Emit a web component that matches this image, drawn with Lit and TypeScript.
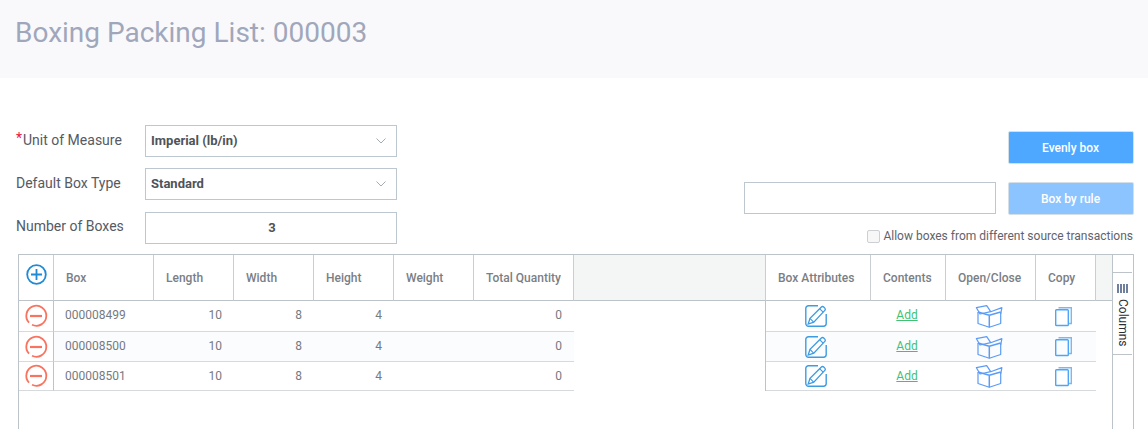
import { LitElement, html, css, svg } from "lit";
import { customElement } from "lit/decorators.js";

const rows = ["000008499", "000008500", "000008501"];

const plusIcon = svg`<circle cx="10.5" cy="10.5" r="9.3" fill="none" stroke="#1f8ad6" stroke-width="1.8"/><path d="M5 10.5h11M10.5 5v11" fill="none" stroke="#1f8ad6" stroke-width="1.8"/>`;
const minusIcon = svg`<path d="M7 19.8A10 10 0 1 0 4 17.6" fill="none" stroke="#f9735f" stroke-width="1.8"/><path d="M5 11h12" stroke="#f9735f" stroke-width="2.2"/>`;
const editIcon = svg`<path d="M13 .8H3.5A2.7 2.7 0 0 0 .8 3.5v15a2.7 2.7 0 0 0 2.7 2.7h15a2.7 2.7 0 0 0 2.7-2.7V9" fill="none" stroke="#3d9be0" stroke-width="1.4"/><path d="M3.2 19l1.8-5.6L16.4 2a1.6 1.6 0 0 1 2.3 0l1.1 1.1a1.6 1.6 0 0 1 0 2.3L8.8 17.1z" fill="none" stroke="#3d9be0" stroke-width="1.3"/><path d="M14.8 3.8l3.4 3.4M5 13.4l3.6 3.7" stroke="#3d9be0" stroke-width="1.1"/>`;
const boxIcon = svg`<g fill="none" stroke="#5c9cf5" stroke-linejoin="round" stroke-width="1.2"><path d="M2 7v11.5l11.3 3.8 11.4-3.8V7"/><path d="M2 7l11.3 3.3L24.7 7M13.3 10.3v12" stroke-width="1.5"/><path d="M4 9L.4 2.6 10.7.6l4 6.1zM14.7 6.7l11.2-4.1-1.2 6.4"/></g>`;
const copyIcon = svg`<g fill="none" stroke-width="1.4"><path d="M3.5 .7H16.3V16.5H13.5" stroke="#7cb8f2"/><rect x=".7" y="2.7" width="12.6" height="15.8" rx=".8" stroke="#4da6f5"/></g>`;

@customElement("app-root")
export class AppRoot extends LitElement {
  static styles = css`
    :host {
      display: block;
      height: 429px;
      overflow: hidden;
      background: #fff;
      font-family: Roboto, "Liberation Sans", sans-serif;
      font-size: 12px;
      color: #6d7178;
    }
    .page-head {
      height: 78px;
      background: #f9f9fc;
      padding: 16px 15px 0;
      box-sizing: border-box;
    }
    .page-head h1 {
      margin: 0;
      font-size: 28px;
      line-height: 34px;
      font-weight: 400;
      color: #a1a7ba;
    }
    .form {
      display: flex;
      justify-content: space-between;
      padding: 47px 14px 0 16px;
      height: 176px;
      box-sizing: border-box;
    }
    .fields {
      display: grid;
      grid-template-columns: 129px 252px;
      row-gap: 11px;
      align-items: center;
      align-content: start;
    }
    label {
      font-size: 14px;
      color: #555a63;
      line-height: 32px;
      margin-top: -2px;
    }
    label.last {
      margin-top: -3px;
    }
    .req {
      color: #ee1148;
      position: relative;
      top: -2px;
      margin-right: 1px;
    }
    .control {
      height: 32px;
      border: 1px solid #bcc7cf;
      background: #fff;
      display: flex;
      align-items: center;
      justify-content: space-between;
      padding: 0 10px 1px 5px;
      box-sizing: border-box;
      font-size: 13px;
      font-weight: 700;
      color: #4f5359;
    }
    .control.num {
      justify-content: center;
      padding: 0 0 1px 2px;
      margin-top: 1px;
    }
    .chev {
      width: 10px;
      height: 6px;
    }
    .actions {
      display: grid;
      grid-template-columns: 252px 126px;
      column-gap: 12px;
      align-content: start;
      margin-top: 6px;
    }
    .btn {
      grid-column: 2;
      height: 33px;
      border: 1px solid #d4dfe8;
      border-radius: 2px;
      box-sizing: border-box;
      background: #4fa8ff;
      color: #fff;
      display: flex;
      align-items: center;
      justify-content: center;
      padding-right: 1px;
      font-size: 12px;
      font-weight: 500;
    }
    .btn.off {
      background: #8cc4ff;
    }
    .rule-row {
      display: contents;
    }
    .rule-input {
      height: 32px;
      border: 1px solid #bcc7cf;
      box-sizing: border-box;
      margin-top: 18px;
    }
    .rule-row .btn {
      margin-top: 18px;
    }
    .allow {
      grid-column: 1 / 3;
      display: flex;
      justify-content: flex-end;
      align-items: center;
      gap: 3px;
      margin: 14px 1px 0 0;
      font-size: 12px;
      color: #5f636b;
      line-height: 14px;
    }
    .box {
      width: 13px;
      height: 13px;
      border: 1px solid #ccd0d4;
      border-radius: 2px;
      background: #f7f7f7;
      box-sizing: border-box;
    }
    .table-wrap {
      display: flex;
      margin: 0 14px 0 18px;
      height: 175px;
      border: 1px solid #bcc3c9;
      border-bottom: 0;
      box-sizing: border-box;
    }
    .grid {
      width: 1093px;
      flex: none;
      display: grid;
      grid-template-columns: 35px 100px 80px 80px 80px 80px 100px 192px 105px 75px 90px 60px 16px;
      grid-template-rows: 46px 31px 30px 29px;
      align-content: start;
    }
    .grid > div {
      box-sizing: border-box;
      display: flex;
      align-items: center;
    }
    .th {
      background: #fff;
      border-right: 1px solid #c9ced2;
      border-bottom: 1px solid #bcc3c9;
      font-weight: 500;
      color: #7a7e85;
      padding-left: 12px;
    }
    .th.first {
      justify-content: center;
      padding: 0 0 7px 1px;
    }
    .fill {
      background: #f4f6f6;
      border-bottom: 1px solid #bcc3c9;
    }
    .fill.bordered {
      border-right: 1px solid #c9ced2;
    }
    .grid > .td {
      align-items: flex-start;
      border-bottom: 1px solid #d6dadd;
      color: #767a81;
      padding: 7px 0 0 11px;
      line-height: 14px;
    }
    .grid > .td.alt {
      background: #fbfcfe;
    }
    .grid > .td.num {
      justify-content: flex-end;
      padding-left: 0;
      padding-right: 12px;
    }
    .grid > .td.link {
      justify-content: center;
      padding: 7px 3px 0 0;
    }
    .grid > .td.icon {
      align-items: center;
      justify-content: center;
      padding: 0 5px 0 0;
    }
    .grid > .td.sel {
      align-items: center;
      border-right: 1px solid #bcc3c9;
      padding: 0 0 0 6px;
    }
    .td a {
      color: #3fc176;
      text-decoration: underline;
    }
    .gap {
      background: #fff;
    }
    .gap.edge {
      border-right: 1px solid #bcc3c9;
    }
    svg {
      display: block;
      overflow: visible;
    }
    .side {
      width: 20px;
      flex: none;
      border-left: 1px solid #bcc3c9;
      box-sizing: border-box;
      background: #fff;
    }
    .tab {
      margin-top: 17px;
      height: 83px;
      border-top: 1px solid #bcc3c9;
      border-bottom: 1px solid #bcc3c9;
      box-sizing: border-box;
      display: flex;
      flex-direction: column;
      align-items: center;
      padding-top: 11px;
      gap: 6px;
      color: #2a2d33;
    }
    .bars {
      width: 11px;
      height: 9px;
      background: repeating-linear-gradient(to right, #6f7f9c 0 2px, transparent 2px 3px);
    }
    .tab span {
      writing-mode: vertical-rl;
      font-size: 12px;
      line-height: 14px;
    }
  `;

  private chevron() {
    return html`<svg class="chev" viewBox="0 0 10 6">
      <path d="M.5.5 5 5 9.5.5" fill="none" stroke="#a3abb3" stroke-width="1" />
    </svg>`;
  }

  private icon(w: number, h: number, body: unknown) {
    return html`<svg width=${w} height=${h} viewBox="0 0 ${w} ${h}">${body}</svg>`;
  }

  private renderRow(id: string, i: number) {
    const alt = i === 1 ? "alt" : "";
    return html`
      <div class="td sel">${this.icon(22, 22, minusIcon)}</div>
      <div class="td ${alt}">${id}</div>
      <div class="td num ${alt}">10</div>
      <div class="td num ${alt}">8</div>
      <div class="td num ${alt}">4</div>
      <div class="td ${alt}"></div>
      <div class="td num ${alt}">0</div>
      <div class="gap edge"></div>
      <div class="td icon ${alt}">${this.icon(22, 22, editIcon)}</div>
      <div class="td link ${alt}"><a>Add</a></div>
      <div class="td icon ${alt}">${this.icon(26, 22, boxIcon)}</div>
      <div class="td icon ${alt}">${this.icon(17, 19, copyIcon)}</div>
      <div class="gap"></div>
    `;
  }

  render() {
    return html`
      <div class="page-head"><h1>Boxing Packing List: 000003</h1></div>
      <div class="form">
        <div class="fields">
          <label><span class="req">*</span>Unit of Measure</label>
          <div class="control">Imperial (lb/in) ${this.chevron()}</div>
          <label>Default Box Type</label>
          <div class="control">Standard ${this.chevron()}</div>
          <label class="last">Number of Boxes</label>
          <div class="control num">3</div>
        </div>
        <div class="actions">
          <div class="btn">Evenly box</div>
          <div class="rule-row">
            <div class="rule-input"></div>
            <div class="btn off">Box by rule</div>
          </div>
          <div class="allow">
            <div class="box"></div>
            Allow boxes from different source transactions
          </div>
        </div>
      </div>
      <div class="table-wrap">
        <div class="grid">
          <div class="th first">${this.icon(21, 21, plusIcon)}</div>
          <div class="th">Box</div>
          <div class="th">Length</div>
          <div class="th">Width</div>
          <div class="th">Height</div>
          <div class="th">Weight</div>
          <div class="th">Total Quantity</div>
          <div class="fill bordered"></div>
          <div class="th">Box Attributes</div>
          <div class="th">Contents</div>
          <div class="th">Open/Close</div>
          <div class="th">Copy</div>
          <div class="fill"></div>
          ${rows.map((id, i) => this.renderRow(id, i))}
        </div>
        <div class="side">
          <div class="tab">
            <div class="bars"></div>
            <span>Columns</span>
          </div>
        </div>
      </div>
    `;
  }
}
